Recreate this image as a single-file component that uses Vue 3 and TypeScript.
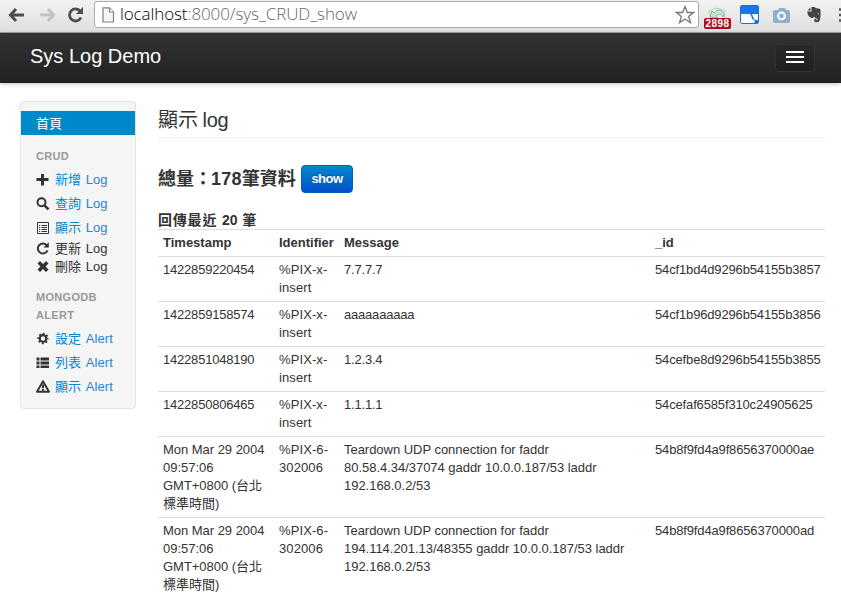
<script setup lang="ts">
interface NavItem {
  icon: string
  cjk: string
  latin: string
  link: boolean
}
interface NavGroup {
  title: string
  items: NavItem[]
}
interface LogRow {
  timestamp: string
  identifier: string
  message: string
  id: string
}

const groups: NavGroup[] = [
  {
    title: 'CRUD',
    items: [
      { icon: 'plus', cjk: '新增', latin: 'Log', link: true },
      { icon: 'search', cjk: '查詢', latin: 'Log', link: true },
      { icon: 'listAlt', cjk: '顯示', latin: 'Log', link: true },
      { icon: 'repeat', cjk: '更新', latin: 'Log', link: false },
      { icon: 'remove', cjk: '刪除', latin: 'Log', link: false },
    ],
  },
  {
    title: 'MongoDB Alert',
    items: [
      { icon: 'cog', cjk: '設定', latin: 'Alert', link: true },
      { icon: 'list', cjk: '列表', latin: 'Alert', link: true },
      { icon: 'warning', cjk: '顯示', latin: 'Alert', link: true },
    ],
  },
]

const teardown = (a: string) =>
  `Teardown UDP connection for faddr ${a} gaddr 10.0.0.187/53 laddr 192.168.0.2/53`
const date = 'Mon Mar 29 2004 09:57:06 GMT+0800 (台北標準時間)'

const rows: LogRow[] = [
  { timestamp: '1422859220454', identifier: '%PIX-x-insert', message: '7.7.7.7', id: '54cf1bd4d9296b54155b3857' },
  { timestamp: '1422859158574', identifier: '%PIX-x-insert', message: 'aaaaaaaaaa', id: '54cf1b96d9296b54155b3856' },
  { timestamp: '1422851048190', identifier: '%PIX-x-insert', message: '1.2.3.4', id: '54cefbe8d9296b54155b3855' },
  { timestamp: '1422850806465', identifier: '%PIX-x-insert', message: '1.1.1.1', id: '54cefaf6585f310c24905625' },
  { timestamp: date, identifier: '%PIX-6-302006', message: teardown('80.58.4.34/37074'), id: '54b8f9fd4a9f8656370000ae' },
  { timestamp: date, identifier: '%PIX-6-302006', message: teardown('194.114.201.13/48355'), id: '54b8f9fd4a9f8656370000ad' },
]
</script>

<template>
  <div class="window">
    <header class="chrome">
      <svg class="nav-icon back" width="18" height="16" viewBox="0 0 18 16">
        <path d="M8 2 2.500 8 8 14M3 8h13" fill="none" stroke="#4d4d4d" stroke-width="3" />
      </svg>
      <svg class="nav-icon forward" width="18" height="16" viewBox="0 0 18 16">
        <path d="M9 2 14.500 8 9 14M14 8H1" fill="none" stroke="#c3c3c3" stroke-width="3" />
      </svg>
      <svg class="nav-icon reload" width="18" height="16" viewBox="0 0 18 16">
        <path d="M13.300 4.300A6 6 0 1 0 14 10.500" fill="none" stroke="#4d4d4d" stroke-width="2.800" />
        <path d="M16 0v7H9z" fill="#4d4d4d" />
      </svg>
      <div class="omnibox">
        <svg class="page-icon" width="13" height="16" viewBox="0 0 13 16">
          <path d="M1 .8h6.500L11.500 5v10H1z" fill="#f6f6f6" stroke="#808080" stroke-width="1.200" />
          <path d="M7.500 1v4h4" fill="#fff" stroke="#808080" stroke-width="1.200" />
        </svg>
        <span class="url"><span class="host">localhost</span>:8000/sys_CRUD_show</span>
        <svg class="star" width="20" height="20" viewBox="0 0 20 20">
          <path d="m10 1.500 2.300 6h6.200l-4.900 3.900 1.900 6.300-5.500-3.700-5.500 3.700 1.900-6.300L1.500 7.500h6.200z" fill="#fff" stroke="#777" stroke-width="1.300" />
        </svg>
      </div>
      <div class="counter">
        <svg width="18" height="14" viewBox="0 0 18 14">
          <path d="M1 4 8 1 17 3 16 13H3z" fill="#e9eeea" stroke="#c3cec5" />
          <path d="M2 10 4 4l2 2c3-4 8-4 10 1l-1 3c-1-3-4-4-7-1l2 2z" fill="#c6e6d0" stroke="#82bd97" />
        </svg>
        <span class="badge">2898</span>
      </div>
      <svg class="ext-board" width="19" height="19" viewBox="0 0 19 19">
        <rect x=".6" y=".6" width="17.800" height="17.800" rx="1.500" fill="#1b78e6" stroke="#0868d5" />
        <path d="M1 9h8.500q1.500 0 2 3t3 3v3H1zM11.500 9H18v6h-2.500q-1.500 0-2.300-3t-1.700-3z" fill="#fff" />
      </svg>
      <svg class="ext-camera" width="18" height="17" viewBox="0 0 18 17">
        <path d="M2 3h3l1-2h6l1 2h2q2 0 2 2v9q0 2-2 2H2q-2 0-2-2V5q0-2 2-2z" fill="#8eafd0" />
        <circle cx="8.500" cy="9" r="3.400" fill="#8eafd0" stroke="#fff" stroke-width="2" />
      </svg>
      <svg class="ext-elephant" width="15" height="16" viewBox="0 0 15 16">
        <path d="M3.500.5v3H.5zM4.500 0h3l1.500 1.300q3.500 0 4.200 1C14 5 13.600 12 12.500 14q-1 1.600-4 1.300-1.500-.3-1.300-2.300.3-1.600 2.300-1.400v1.600h1.200q.3-2-1.700-2.200Q7.500 10.500 7 9.700 6 11.500 4 10.800 1 10 .2 4.500h4.300z" fill="#444" />
        <path d="M10 6.500q2-1 2.200 1z" fill="#ddd" />
      </svg>
      <svg class="menu" width="3" height="14" viewBox="0 0 3 14">
        <path d="M0 1.500h3M0 7h3M0 12.500h3" stroke="#555" stroke-width="2.500" />
      </svg>
    </header>

    <nav class="navbar">
      <span class="brand">Sys Log Demo</span>
      <button class="toggle" type="button"><i></i><i></i><i></i></button>
    </nav>

    <div class="page">
      <aside class="sidebar">
        <div class="active">首頁</div>
        <template v-for="g in groups" :key="g.title">
          <div class="nav-header">{{ g.title }}</div>
          <div v-for="item in g.items" :key="item.icon" class="item" :class="{ link: item.link }">
            <svg class="glyph" width="14" height="14" viewBox="0 0 14 14">
              <path v-if="item.icon === 'plus'" d="M5 1h3v4h4.500v3H8v4.500H5V8H.5V5H5z" />
              <g v-else-if="item.icon === 'search'" fill="none" stroke="#333">
                <circle cx="5.500" cy="5.300" r="4" stroke-width="2" />
                <path d="m8.500 8.300 4 4" stroke-width="2.600" />
              </g>
              <g v-else-if="item.icon === 'listAlt'" fill="none" stroke="#333">
                <path d="M1.500 1.500h11v11h-11z" />
                <path d="M3 4.500h1.200M5.500 4.500H11M3 6.500h1.200M5.500 6.500H11M3 8.500h1.200M5.500 8.500H11M3 10.500h1.200M5.500 10.500H11" />
              </g>
              <g v-else-if="item.icon === 'repeat'">
                <path d="M10.500 3A5 5 0 1 0 11.500 8.300" fill="none" stroke="#333" stroke-width="2" />
                <path d="M12.800.2v5.300H7.500z" />
              </g>
              <path v-else-if="item.icon === 'remove'" d="m4 1 3 3 3-3L12.500 3.500l-3 3 3 3-2.500 2.500-3-3-3 3L1.500 9.500l3-3-3-3z" />
              <g v-else-if="item.icon === 'cog'" fill="none" stroke="#333">
                <circle cx="7" cy="6.500" r="3.300" stroke-width="2.200" />
                <circle cx="7" cy="6.500" r="4.900" stroke-width="1.500" stroke-dasharray="1.900 1.948" stroke-dashoffset=".95" />
              </g>
              <path v-else-if="item.icon === 'list'" d="M.5 1.500h3v3h-3zM4.500 1.500H13v3H4.500zM.5 5.500h3v3h-3zM4.500 5.500H13v3H4.500zM.5 9.500h3v2.500h-3zM4.500 9.500H13V12H4.500z" />
              <g v-else>
                <path d="M7 1.300 13 11.800H1z" fill="none" stroke="#333" stroke-width="1.900" stroke-linejoin="round" />
                <path d="M6 4.500h2v3.700H6zM6 9h2v1.700H6z" />
              </g>
            </svg>
            <span class="label">{{ item.cjk }} <span class="latin">{{ item.latin }}</span></span>
          </div>
        </template>
      </aside>

      <main class="content">
        <h1 class="title">顯示 <span>log</span></h1>
        <div class="total">
          <h2 class="total-text">總量：<span>178</span>筆資料</h2>
          <button class="show" type="button">show</button>
        </div>
        <h3 class="recent">回傳最近 <span>20</span> 筆</h3>
        <table class="table">
          <colgroup>
            <col class="c-time" /><col class="c-ident" /><col class="c-msg" /><col class="c-id" />
          </colgroup>
          <thead>
            <tr><th>Timestamp</th><th>Identifier</th><th>Message</th><th>_id</th></tr>
          </thead>
          <tbody>
            <tr v-for="r in rows" :key="r.id">
              <td :class="{ prose: r.timestamp === date }">{{ r.timestamp }}</td>
              <td class="ident">{{ r.identifier }}</td>
              <td :class="{ prose: r.timestamp === date }">{{ r.message }}</td>
              <td class="oid">{{ r.id }}</td>
            </tr>
          </tbody>
        </table>
      </main>
    </div>
  </div>
</template>

<style>
body {
  overflow: hidden;
  background: #fff;
}
</style>

<style scoped>
.window {
  width: 841px;
  height: 595px;
  overflow: hidden;
  font-family: "Liberation Sans", "Noto Sans CJK TC", sans-serif;
  font-size: 13px;
  line-height: 18px;
  color: #333;
}
.window * {
  box-sizing: border-box;
}
.chrome {
  display: flex;
  align-items: flex-start;
  height: 33px;
  background: linear-gradient(#f2f2f2, #dfdfdf);
  border-bottom: 1px solid #a0a0a0;
}
.chrome svg {
  display: block;
  flex: none;
}
.nav-icon {
  margin-top: 7px;
}
.back { margin-left: 8px; }
.forward { margin-left: 13px; }
.reload { margin-left: 10px; }
.omnibox {
  display: flex;
  align-items: center;
  flex: none;
  width: 605px;
  height: 27px;
  margin: 1px 0 0 9px;
  padding: 0 3px 0 7px;
  background: #fff;
  border: 1px solid #aaa;
  border-radius: 3px;
}
.url {
  flex: 1;
  margin-left: 5px;
  padding-bottom: 2px;
  font-family: "Open Sans", "Noto Sans", sans-serif;
  font-size: 17px;
  font-weight: 300;
  line-height: 22px;
  letter-spacing: -0.1px;
  color: #666;
  white-space: nowrap;
}
.host { color: #000; }
.counter {
  flex: none;
  width: 27px;
  height: 22px;
  margin: 7px 0 0 5px;
  padding-left: 4px;
}
.badge {
  display: block;
  width: 27px;
  height: 11px;
  margin: -3px 0 0 -4px;
  position: relative;
  border-radius: 2px;
  background: #b1091d;
  color: #fff;
  font-size: 10px;
  font-weight: bold;
  letter-spacing: 0.5px;
  line-height: 11px;
  text-align: center;
}
.ext-board { margin: 5px 0 0 9px; }
.ext-camera { margin: 7px 0 0 14px; }
.ext-elephant { margin: 7px 0 0 16px; }
.menu { margin: 8px 0 0 17px; }
.navbar {
  display: flex;
  align-items: flex-start;
  justify-content: space-between;
  height: 50px;
  padding: 10px 26px 0 30px;
  background: linear-gradient(#333, #222);
  border-bottom: 1px solid #1c1c1c;
  box-shadow: 0 1px 4px rgba(0, 0, 0, 0.25);
}
.brand {
  font-size: 20px;
  line-height: 26px;
  color: #fff;
}
.toggle {
  display: flex;
  flex-direction: column;
  gap: 3px;
  width: 40px;
  height: 28px;
  margin-top: 1px;
  padding: 6px 10px;
  border: 1px solid #333;
  border-radius: 4px;
  background: linear-gradient(#292929, #202020);
}
.toggle i {
  height: 2px;
  background: #fff;
}
.page {
  display: flex;
  gap: 22px;
  padding: 18px 16px 0 20px;
}
.sidebar {
  flex: none;
  width: 116px;
  height: 308px;
  padding-top: 9px;
  background: #f5f5f5;
  border: 1px solid #e3e3e3;
  border-radius: 4px;
}
.active {
  height: 24px;
  padding: 4px 15px 2px;
  background: #0088cc;
  color: #fff;
}
.nav-header {
  padding: 3px 15px;
  margin-top: 9px;
  font-size: 11px;
  font-weight: bold;
  letter-spacing: 0.3px;
  color: #999;
  text-transform: uppercase;
}
.item {
  display: flex;
  align-items: center;
  padding: 0 15px;
  height: 18px;
  white-space: nowrap;
}
.item.link {
  height: 24px;
  color: #0088cc;
}
.glyph {
  flex: none;
  fill: #333;
}
.label {
  margin-left: 5px;
  word-spacing: 1px;
}
.latin { letter-spacing: 0.1px; }
.link .latin { color: #2b84cc; }
.content {
  width: 667px;
}
.title {
  height: 37px;
  margin: 0;
  border-bottom: 1px solid #eee;
  font-size: 20px;
  font-weight: normal;
  line-height: 38px;
}
.title span {
  margin-left: -1px;
  letter-spacing: -0.3px;
}
.total {
  display: flex;
  gap: 5px;
  height: 28px;
  margin-top: 27px;
}
.total-text {
  margin: 0;
  width: 138px;
  font-size: 18px;
  line-height: 28px;
  white-space: nowrap;
}
.total-text span {
  margin: 0 0 0 -1px;
  letter-spacing: 0.2px;
}
.show {
  width: 52px;
  height: 28px;
  padding: 0;
  border: 1px solid #0460b8;
  border-radius: 4px;
  background: linear-gradient(#0088cc, #0050cc);
  color: #fff;
  font: bold 13px/24px "Liberation Sans", sans-serif;
  letter-spacing: -0.5px;
  text-shadow: 0 -1px 0 rgba(0, 0, 0, 0.25);
}
.recent {
  height: 18px;
  margin: 18px 0 0;
  font-size: 14px;
  line-height: 18px;
  letter-spacing: 0.8px;
}
.recent span { letter-spacing: 0; }
.table {
  width: 667px;
  table-layout: fixed;
  border-collapse: separate;
  border-spacing: 0;
}
.c-time { width: 116px; }
.c-ident { width: 65px; }
.c-msg { width: 311px; }
.c-id { width: 175px; }
th,
td {
  padding: 4px 5px;
  border-top: 1px solid #ddd;
  vertical-align: top;
  text-align: left;
}
td {
  letter-spacing: -0.2px;
}
td.prose {
  letter-spacing: -0.03px;
}
td.ident {
  letter-spacing: 0.1px;
}
td.oid {
  letter-spacing: -0.15px;
}
th {
  white-space: nowrap;
}
</style>
